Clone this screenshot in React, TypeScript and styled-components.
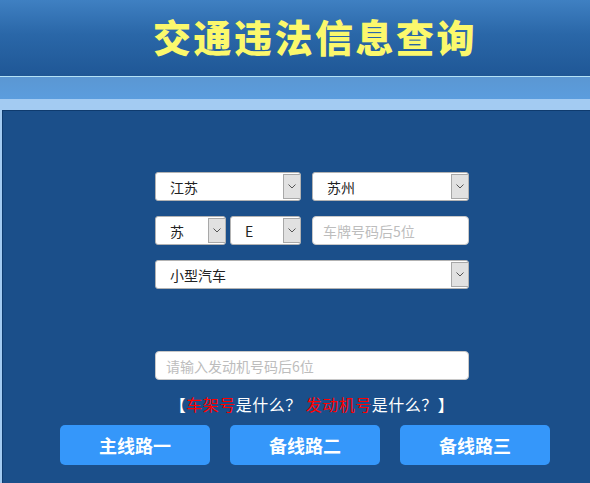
import React from 'react'
import styled, { createGlobalStyle } from 'styled-components'

const GlobalStyle = createGlobalStyle`
  html, body {
    margin: 0;
    padding: 0;
    background: #1b4f8a;
    font-family: "Noto Sans CJK SC", "Noto Sans", sans-serif;
  }
`

const Page = styled.div`
  width: 590px;
  height: 483px;
  overflow: hidden;
  display: flex;
  flex-direction: column;
  background: #a3cbf2;
`

const Header = styled.header`
  height: 77px;
  display: flex;
  align-items: center;
  justify-content: center;
  padding-left: 40px;
  box-sizing: border-box;
  background: linear-gradient(to bottom, #3f80c2 0%, #2a67a8 45%, #1f5796 100%);
  border-bottom: 1px solid #b4e2f6;
`

const Title = styled.h1`
  margin: 0;
  margin-top: -4px;
  font-size: 38px;
  font-weight: 900;
  letter-spacing: 2.5px;
  color: #fbf86c;
  line-height: 1;
`

const Band = styled.div`
  height: 22px;
  background: linear-gradient(to bottom, #5b97d3, #5b9dde);
`

const LightBand = styled.div`
  height: 11px;
  background: #a3cbf2;
`

const Panel = styled.main`
  flex: 1;
  margin-left: 2px;
  background: #1b4f8a;
  border-top: 1px solid #0f3b6e;
  border-left: 1px solid #0f3b6e;
  padding-top: 61px;
`

const Form = styled.div`
  width: 314px;
  margin-left: 152px;
  display: flex;
  flex-direction: column;
`

const Row = styled.div<{ $top?: number }>`
  display: flex;
  gap: 11px;
  margin-top: ${({ $top }) => $top ?? 0}px;
`

const Pair = styled.div`
  display: flex;
  gap: 4px;
  width: 146px;
`

const SelectBox = styled.div<{ $w?: number }>`
  box-sizing: border-box;
  height: 29px;
  width: ${({ $w }) => ($w ? `${$w}px` : 'auto')};
  flex: ${({ $w }) => ($w ? 'none' : '1')};
  display: flex;
  align-items: stretch;
  padding: 1px 0 1px 0;
  background: #fff;
  border: 1px solid #b3b3b3;
  border-radius: 3px;
  overflow: hidden;
`

const SelectValue = styled.span`
  flex: 1;
  display: flex;
  align-items: center;
  padding-left: 14px;
  font-size: 14px;
  color: #222;
`

const ArrowBox = styled.span`
  box-sizing: border-box;
  width: 17px;
  display: flex;
  align-items: center;
  justify-content: center;
  background: #e1e1e1;
  border: 1px solid #a8a8a8;
  border-right: none;
`

const TextInput = styled.input<{ $w?: number }>`
  box-sizing: border-box;
  height: 29px;
  width: ${({ $w }) => ($w ? `${$w}px` : '100%')};
  padding: 0 10px;
  border: 1px solid #c8c8c8;
  border-radius: 4px;
  background: #fff;
  font-family: inherit;
  font-size: 14px;
  color: #222;
  outline: none;

  &::placeholder {
    color: #bdbdbd;
  }
`

const Hints = styled.p`
  margin: 13px 0 0 0;
  width: 314px;
  text-align: center;
  font-size: 16px;
  letter-spacing: 0.5px;
  line-height: 22px;
  color: #fff;
  white-space: nowrap;
`

const Red = styled.a`
  color: #ff0000;
  text-decoration: none;
`

const Buttons = styled.div`
  display: flex;
  gap: 20px;
  margin: 10px 0 0 57px;
`

const LineButton = styled.button`
  width: 150px;
  height: 40px;
  border: none;
  border-radius: 5px;
  background: #3597fa;
  color: #fff;
  font-family: inherit;
  font-size: 18px;
  font-weight: 700;
  cursor: pointer;
`

function Chevron() {
  return (
    <svg width="8" height="5" viewBox="0 0 8 5">
      <path d="M0.5 0.5 L4 4 L7.5 0.5" fill="none" stroke="#555" strokeWidth="1" />
    </svg>
  )
}

function Select({ value, width }: { value: string; width?: number }) {
  return (
    <SelectBox $w={width}>
      <SelectValue>{value}</SelectValue>
      <ArrowBox>
        <Chevron />
      </ArrowBox>
    </SelectBox>
  )
}

export default function App() {
  return (
    <Page>
      <GlobalStyle />
      <Header>
        <Title>交通违法信息查询</Title>
      </Header>
      <Band />
      <LightBand />
      <Panel>
        <Form>
          <Row>
            <Select value="江苏" width={146} />
            <Select value="苏州" width={157} />
          </Row>
          <Row $top={15}>
            <Pair>
              <Select value="苏" />
              <Select value="E" />
            </Pair>
            <TextInput $w={157} placeholder="车牌号码后5位" />
          </Row>
          <Row $top={15}>
            <Select value="小型汽车" width={314} />
          </Row>
          <Row $top={62}>
            <TextInput placeholder="请输入发动机号码后6位" />
          </Row>
          <Hints>
            【<Red href="#">车架号</Red>是什么？ <Red href="#">发动机号</Red>是什么？】
          </Hints>
        </Form>
        <Buttons>
          <LineButton>主线路一</LineButton>
          <LineButton>备线路二</LineButton>
          <LineButton>备线路三</LineButton>
        </Buttons>
      </Panel>
    </Page>
  )
}
